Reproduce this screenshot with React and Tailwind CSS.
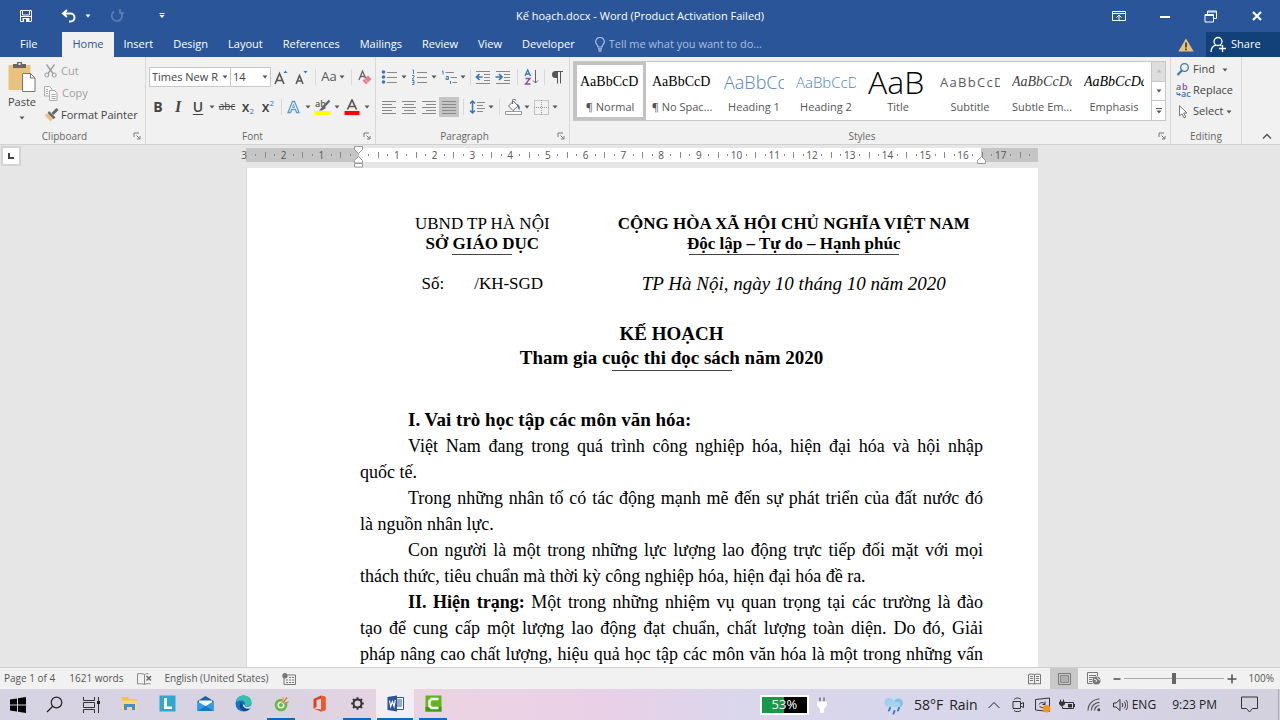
import { useState } from 'react';
import clsx from 'clsx';

const TABS = ['File', 'Home', 'Insert', 'Design', 'Layout', 'References', 'Mailings', 'Review', 'View', 'Developer'];

const STYLES = [
  { name: 'Normal', mark: true, sample: 'AaBbCcD', className: "font-['Liberation_Serif',serif] text-sm text-black" },
  { name: 'No Spac...', mark: true, sample: 'AaBbCcD', className: "font-['Liberation_Serif',serif] text-sm text-black" },
  { name: 'Heading 1', sample: 'AaBbCc', className: 'font-light text-lg text-[#4d84bd]' },
  { name: 'Heading 2', sample: 'AaBbCcD', className: 'font-light text-[15px] text-[#4d84bd]' },
  { name: 'Title', sample: 'AaB', className: 'font-light text-[32px] text-black' },
  { name: 'Subtitle', sample: 'AaBbCcD', className: 'text-[13px] tracking-widest text-[#5a5a5a]' },
  { name: 'Subtle Em...', sample: 'AaBbCcDd', className: "font-['Liberation_Serif',serif] text-sm italic text-[#404040]" },
  { name: 'Emphasis', sample: 'AaBbCcDd', className: "font-['Liberation_Serif',serif] text-sm italic text-black" },
];

function Svg({ w = 16, h = 16, children, className }) {
  return (
    <svg width={w} height={h} viewBox={`0 0 ${w} ${h}`} fill="none" className={clsx('shrink-0', className)} aria-hidden="true">
      {children}
    </svg>
  );
}

function Caret({ className = 'text-[#555]' }) {
  return (
    <Svg w={6} h={4} className={className}>
      <path d="M0.5 0.5h5L3 3.5z" fill="currentColor" />
    </Svg>
  );
}

function Tool({ label, className = 'w-5', active, children }) {
  return (
    <button
      type="button"
      aria-label={label}
      className={clsx('flex h-5 shrink-0 items-center justify-center hover:bg-[#d5d5d5]', active && 'bg-[#c5c5c5]', className)}
    >
      {children}
    </button>
  );
}

function Drop({ label, className = 'w-2' }) {
  return (
    <Tool label={`${label} options`} className={className}>
      <Caret />
    </Tool>
  );
}

function Sep({ className = 'w-2' }) {
  return (
    <span className={clsx('flex h-4 shrink-0 justify-center', className)}>
      <span className="w-px bg-[#d8d8d8]" />
    </span>
  );
}

function Group({ name, launcher, className, children }) {
  return (
    <section aria-label={name} className={clsx('flex flex-col border-r border-[#d8d8d8]', className)}>
      <div className="flex-1">{children}</div>
      <div className="flex h-4 items-center justify-center">
        <span className="flex-1 text-center text-[10px] leading-4 text-[#666]">{name}</span>
        {launcher && (
          <button type="button" aria-label={`${name} settings`} className="flex w-4 justify-center">
            <Svg w={8} h={8}>
              <path d="M1 5V1h5M3.5 3.5l3 3M7 4v3H4" stroke="#777" />
            </Svg>
          </button>
        )}
      </div>
    </section>
  );
}

function TitleBar() {
  return (
    <header className="grid h-8 grid-cols-[1fr_auto_1fr] items-center bg-[#2a5699] text-white">
      <div className="flex items-center pl-[19px]">
        <button type="button" aria-label="Save">
          <Svg w={14} h={14}>
            <path d="M1.500 1.500h11v11h-11z" stroke="#fff" />
            <path d="M3.500 1.500v4.500h7V1.500M1 7.500h12" stroke="#fff" />
            <path d="M3.500 9h7v4h-7z" fill="#fff" />
            <path d="M5 10h2v3H5z" fill="#2a5699" />
          </Svg>
        </button>
        <button type="button" aria-label="Undo" className="ml-7">
          <Svg w={16} h={14}>
            <path d="M6 1L2 4.500L6 8M2.500 4.500H9.500a4 4 0 0 1 0 8H8" stroke="#fff" strokeWidth="2" />
          </Svg>
        </button>
        <button type="button" aria-label="Undo history" className="ml-2">
          <Caret className="text-white" />
        </button>
        <button type="button" aria-label="Redo" className="ml-[18px]">
          <Svg w={16} h={16}>
            <path d="M5 3.500A5.200 5.200 0 1 0 11.500 4M11 1v4h4" stroke="#5c80b8" strokeWidth="1.700" />
          </Svg>
        </button>
        <button type="button" aria-label="Customize Quick Access Toolbar" className="ml-[34px]">
          <Svg w={6} h={6}>
            <path d="M0.500 0.500h5" stroke="#fff" />
            <path d="M0.500 2h5L3 5z" fill="#fff" />
          </Svg>
        </button>
      </div>
      <h1 className="text-[11px]">Kế hoạch.docx - Word (Product Activation Failed)</h1>
      <div className="flex items-center justify-end">
        <button type="button" aria-label="Ribbon Display Options" className="flex w-[46px] justify-center">
          <Svg w={14} h={12}>
            <path d="M0.500 1.500h13v9H0.500zM0.500 3.500h13" stroke="#fff" />
            <path d="M7 10V5M4.500 7.500L7 5l2.500 2.500" stroke="#fff" />
          </Svg>
        </button>
        <button type="button" aria-label="Minimize" className="flex w-[46px] justify-center">
          <Svg w={10} h={6}>
            <path d="M0 4h10" stroke="#fff" strokeWidth="2" />
          </Svg>
        </button>
        <button type="button" aria-label="Restore" className="flex w-[46px] justify-center">
          <Svg w={14} h={13}>
            <path d="M3.500 4V1h9v7.500H10" stroke="#fff" />
            <path d="M3.500 2h9" stroke="#fff" />
            <path d="M1 4.500h8.500v7.500H1z" stroke="#fff" />
            <path d="M1 5.500h8.500" stroke="#fff" />
          </Svg>
        </button>
        <button type="button" aria-label="Close" className="flex w-[46px] justify-center">
          <Svg w={10} h={10}>
            <path d="M1 1l8 8M9 1L1 9" stroke="#fff" strokeWidth="2.200" />
          </Svg>
        </button>
      </div>
    </header>
  );
}

function TabRow({ active, onSelect }) {
  return (
    <nav className="flex h-[25px] items-stretch bg-[#2a5699] text-[11px] text-white">
      <div role="tablist" className="flex">
        {TABS.map((tab) => (
          <button
            key={tab}
            type="button"
            role="tab"
            aria-selected={tab === active}
            onClick={() => onSelect(tab)}
            className={clsx(
              tab === 'File' ? 'pl-5 pr-[25px]' : 'px-2.5',
              tab === active && 'bg-[#f1f1f1] text-[#2a5699]'
            )}
          >
            {tab}
          </button>
        ))}
      </div>
      <label className="flex items-center pl-2.5">
        <Svg w={10} h={15}>
          <path d="M3 10c0-2-2.300-2.700-2.300-5.300a4.300 4.300 0 0 1 8.600 0C9.300 7.300 7 8 7 10z" stroke="#a9bfdf" strokeWidth="1.200" />
          <path d="M3 12h4M3.500 14h3" stroke="#a9bfdf" strokeWidth="1.300" />
        </Svg>
        <input
          type="text"
          aria-label="Tell me what you want to do"
          placeholder="Tell me what you want to do..."
          className="ml-1 w-48 bg-transparent placeholder:text-[#a9bfdf] focus:outline-none"
        />
      </label>
      <div className="ml-auto flex items-stretch">
        <button type="button" aria-label="Activation warning" className="px-3">
          <Svg w={16} h={14}>
            <path d="M8 0.500L15.700 13.500H0.300z" fill="#e8c27c" />
            <path d="M8 4.500v5M8 10.500v1.800" stroke="#333" strokeWidth="1.600" />
          </Svg>
        </button>
        <button type="button" className="flex w-[74px] items-center gap-1 bg-[#124078] pl-1">
          <Svg w={17} h={17}>
            <circle cx="8" cy="5.500" r="4" stroke="#fff" strokeWidth="1.300" />
            <path d="M1 16c0-3.500 2-6 5-6.800M10 9l1.500 1" stroke="#fff" strokeWidth="1.300" />
            <path d="M12.500 9v7M9 12.500h7" stroke="#fff" strokeWidth="1.300" />
          </Svg>
          Share
        </button>
      </div>
    </nav>
  );
}

function ClipboardGroup() {
  return (
    <Group name="Clipboard" launcher className="w-[146px]">
      <div className="flex text-[11px]">
        <button type="button" className="flex w-11 flex-col items-center pt-1 text-[#444]">
          <Svg w={28} h={32}>
            <path d="M0.500 4h22v25h-22z" fill="#e9c37b" />
            <path d="M5 3h4V1h5v2h4v4H5z" fill="#666" />
            <path d="M10.500 2h2v2h-2z" fill="#f1f1f1" />
            <path d="M14.500 12.500h8l4.500 4.500v13.500H14.500z" fill="#fff" stroke="#777" />
            <path d="M22.500 12.500V17H27" stroke="#777" />
          </Svg>
          <span className="mt-px leading-4">Paste</span>
          <span className="flex h-4 items-center"><Caret /></span>
        </button>
        <div className="flex flex-col pt-[3px]">
          <button type="button" className="flex h-[22px] items-center gap-1 text-[#a0a0a0]">
            <Svg w={13} h={14}>
              <path d="M2.500 0.500l6.500 9M10.500 0.500l-6.500 9" stroke="#999" strokeWidth="1.300" />
              <circle cx="2.800" cy="11" r="2" stroke="#999" />
              <circle cx="10.200" cy="11" r="2" stroke="#999" />
            </Svg>
            Cut
          </button>
          <button type="button" className="flex h-[22px] items-center gap-1 text-[#a0a0a0]">
            <Svg w={14} h={15}>
              <path d="M0.500 0.500h5l2.500 2.500v7H0.500z" fill="#f8f8f8" stroke="#aaa" />
              <path d="M5.500 4.500h5l2.500 2.500v7.500H5.500z" fill="#f8f8f8" stroke="#aaa" />
              <path d="M2 3.500h2M2 5.500h2M2 7.500h2M7.500 8.500h4M7.500 10.500h4M7.500 12.500h4" stroke="#aaa" />
            </Svg>
            Copy
          </button>
          <button type="button" className="flex h-[22px] items-center gap-[2px] whitespace-nowrap text-[#444]">
            <Svg w={15} h={14}>
              <path d="M0.500 7l4-2 5 5.500-3 3z" fill="#e9c37b" />
              <path d="M5 3l6.500 6.500-2 1.500L3.800 5z" fill="#666" />
              <path d="M8.500 6l5-5" stroke="#666" strokeWidth="3" />
            </Svg>
            Format Painter
          </button>
        </div>
      </div>
    </Group>
  );
}

function FontGroup() {
  return (
    <Group name="Font" launcher className="w-[230px]">
      <div className="flex items-center pl-[3px] pt-2.5">
        <span className="relative w-[82px]">
          <select aria-label="Font" className="h-5 w-full appearance-none border border-[#c8c8c8] bg-white pl-[2px] pr-2 text-[11px] text-[#444]">
            <option>Times New R</option>
          </select>
          <span className="pointer-events-none absolute right-[3px] top-2"><Caret /></span>
        </span>
        <span className="relative -ml-px w-[41px]">
          <select aria-label="Font size" className="h-5 w-full appearance-none border border-[#c8c8c8] bg-white pl-[2px] pr-2 text-[11px] text-[#444]">
            <option>14</option>
          </select>
          <span className="pointer-events-none absolute right-[3px] top-2"><Caret /></span>
        </span>
        <Tool label="Increase Font Size">
          <Svg w={14} h={15}>
            <path d="M1 14L5.500 3.500L10 14M2.500 10.500h6" stroke="#555" strokeWidth="1.600" />
            <path d="M9.500 3l2-2.500 2 2.500z" fill="#3a76b5" />
          </Svg>
        </Tool>
        <Tool label="Decrease Font Size">
          <Svg w={14} h={15}>
            <path d="M2 14L5.500 5.500L9 14M3 11h5" stroke="#555" strokeWidth="1.500" />
            <path d="M9.500 1h4l-2 2.500z" fill="#3a76b5" />
          </Svg>
        </Tool>
        <Sep />
        <Tool label="Change Case" className="w-7">
          <span className="mr-[2px] text-[13px] text-[#555]">Aa</span>
          <Caret />
        </Tool>
        <Sep />
        <Tool label="Clear Formatting">
          <Svg w={14} h={15}>
            <path d="M1 10L4.500 1L8 9M2.300 6.500h4.500" stroke="#666" strokeWidth="1.300" />
            <path d="M4.500 10.500l5.500-5 3.500 3.500-5.500 5.500z" fill="#e57f8e" />
            <path d="M6.500 9l3.300 3.500" stroke="#f6c6cd" />
          </Svg>
        </Tool>
      </div>
      <div className="flex items-center pl-[2px] pt-2.5 text-[#444]">
        <Tool label="Bold"><b className="text-sm">B</b></Tool>
        <Tool label="Italic"><b className="font-['Liberation_Serif',serif] text-base italic">I</b></Tool>
        <Tool label="Underline"><span className="text-sm font-semibold underline underline-offset-2">U</span></Tool>
        <Drop label="Underline" />
        <Tool label="Strikethrough" className="w-[22px]"><span className="text-[10px] line-through">abc</span></Tool>
        <Tool label="Subscript">
          <span className="text-sm font-semibold">x</span>
          <span className="mt-2 text-[8px] text-[#3a76b5]">2</span>
        </Tool>
        <Tool label="Superscript">
          <span className="text-sm font-semibold">x</span>
          <span className="mb-2 text-[8px] text-[#3a76b5]">2</span>
        </Tool>
        <Sep className="w-[6px]" />
        <Tool label="Text Effects">
          <Svg w={14} h={14}>
            <path d="M1 12.500L5.500 1.500h2l4.500 11H9.500L8.500 9.500h-4l-1 3z" stroke="#5b9bd5" strokeWidth="1.300" fill="#fff" />
            <path d="M5.300 7.500L6.500 4.300l1.200 3.200z" stroke="#5b9bd5" />
          </Svg>
        </Tool>
        <Drop label="Text effect" />
        <Tool label="Text Highlight Color">
          <Svg w={17} h={16}>
            <text x="1" y="8" fontSize="9" fontWeight="600" fill="#555">ab</text>
            <path d="M15.500 1.500L9 8.500" stroke="#666" strokeWidth="2.500" />
            <path d="M9.500 6.500l2.500 2.500-4 2.500H5z" fill="#666" />
            <path d="M0.500 12h16v4h-16z" fill="#ffff00" />
          </Svg>
        </Tool>
        <Drop label="Highlight" className="w-[10px]" />
        <Tool label="Font Color">
          <Svg w={16} h={16}>
            <path d="M3.500 10.500L8 1L12.500 10.500M5 7.500h6" stroke="#555" strokeWidth="1.700" />
            <path d="M0.500 12h15v4h-15z" fill="#f00" />
          </Svg>
        </Tool>
        <Drop label="Font color" className="w-[10px]" />
      </div>
    </Group>
  );
}

const ALIGN_LINES = {
  left: 'M1 1.500h14M1 4.500h10M1 7.500h14M1 10.500h10M1 13.500h14',
  center: 'M1 1.500h14M3 4.500h10M1 7.500h14M3 10.500h10M1 13.500h14',
  right: 'M1 1.500h14M5 4.500h10M1 7.500h14M5 10.500h10M1 13.500h14',
  justify: 'M1 1.500h14M1 4.500h14M1 7.500h14M1 10.500h14M1 13.500h14',
};

function ParagraphGroup() {
  const [align, setAlign] = useState('justify');
  return (
    <Group name="Paragraph" launcher className="w-[194px]">
      <div className="flex items-center pl-[3px] pt-2.5">
        <Tool label="Bullets">
          <Svg w={16} h={14}>
            <circle cx="2.500" cy="2" r="1.800" fill="#3a76b5" />
            <circle cx="2.500" cy="7" r="1.800" fill="#3a76b5" />
            <circle cx="2.500" cy="12" r="1.800" fill="#3a76b5" />
            <path d="M6 2.500h10M6 7.500h10M6 12.500h10" stroke="#888" />
          </Svg>
        </Tool>
        <Drop label="Bullet" className="w-[10px]" />
        <Tool label="Numbering">
          <Svg w={16} h={16}>
            <path d="M1.500 1h1v4M1 6.500h2v1.500l-2 2h2M1 11.500h2v4H1M1.500 13.500H3" stroke="#3a76b5" strokeWidth="0.900" />
            <path d="M6 3.500h10M6 8.500h10M6 13.500h10" stroke="#888" />
          </Svg>
        </Tool>
        <Drop label="Numbering" className="w-[10px]" />
        <Tool label="Multilevel List">
          <Svg w={16} h={16}>
            <path d="M1 2h1v3.500M5 7.500h2.500v3H5V9h2.500M9.500 12v3" stroke="#3a76b5" strokeWidth="0.900" />
            <path d="M4.500 3.500H13M9.500 8.500H16M11.500 13.500H16" stroke="#888" />
          </Svg>
        </Tool>
        <Drop label="Multilevel" />
        <Sep className="w-[6px]" />
        <Tool label="Decrease Indent">
          <Svg w={16} h={14}>
            <path d="M1 1.500h14M9 4.500h6M9 7.500h6M9 10.500h6M1 13.500h14" stroke="#888" />
            <path d="M7.500 7H2M4.500 4L1.500 7l3 3" stroke="#3a76b5" strokeWidth="1.700" />
          </Svg>
        </Tool>
        <Tool label="Increase Indent">
          <Svg w={16} h={14}>
            <path d="M1 1.500h14M9 4.500h6M9 7.500h6M9 10.500h6M1 13.500h14" stroke="#888" />
            <path d="M0.500 7H6M4 4l3 3-3 3" stroke="#3a76b5" strokeWidth="1.700" />
          </Svg>
        </Tool>
        <Sep />
        <Tool label="Sort">
          <Svg w={15} h={16}>
            <path d="M1 7L3.700 1L6.500 7M2 5h3.500" stroke="#3a76b5" strokeWidth="1.300" />
            <path d="M1.500 9.500H6L1.500 15H6.500" stroke="#8a4fa3" strokeWidth="1.400" />
            <path d="M11.500 1v13M9 11.500l2.500 2.500 2.500-2.500" stroke="#666" />
          </Svg>
        </Tool>
        <Sep className="w-[6px]" />
        <Tool label="Show paragraph marks">
          <Svg w={12} h={14}>
            <path d="M6 1H4.500a3.500 3.500 0 0 0 0 7H6z" fill="#555" />
            <path d="M6.500 1v12.500M9.500 1v12.500M4.500 1.500H12" stroke="#555" />
          </Svg>
        </Tool>
      </div>
      <div className="flex items-center pl-[3px] pt-2.5">
        {Object.keys(ALIGN_LINES).map((key) => (
          <button
            key={key}
            type="button"
            aria-label={`Align ${key}`}
            aria-pressed={align === key}
            onClick={() => setAlign(key)}
            className={clsx('flex h-5 w-5 items-center justify-center', align === key && 'bg-[#c5c5c5]')}
          >
            <Svg w={16} h={15}><path d={ALIGN_LINES[key]} stroke="#888" /></Svg>
          </button>
        ))}
        <Sep />
        <Tool label="Line Spacing">
          <Svg w={16} h={16}>
            <path d="M3.500 2v12M1 4.500L3.500 2 6 4.500M1 11.500L3.500 14 6 11.500" stroke="#3a76b5" strokeWidth="1.500" />
            <path d="M8 3.500h8M8 6.500h6M8 9.500h8M8 12.500h6" stroke="#888" />
          </Svg>
        </Tool>
        <Drop label="Spacing" />
        <Sep />
        <Tool label="Shading">
          <Svg w={17} h={16}>
            <path d="M3.500 7L8.500 2l4.500 5-5 4.500z" fill="#fff" stroke="#666" />
            <path d="M7.500 5V1.500a1.500 1.500 0 0 1 3 0" stroke="#666" />
            <path d="M12 5c2 0.500 3.500 3 2.500 6-1-0.500-2-2-1.500-4z" fill="#3a76b5" />
            <path d="M0.500 12.500h16v3h-16z" fill="#fff" stroke="#999" />
          </Svg>
        </Tool>
        <Drop label="Shading" />
        <Tool label="Borders">
          <Svg w={15} h={15}>
            <path d="M0.500 0.500h14v14h-14zM7.500 0v15M0 7.500h15" stroke="#999" strokeDasharray="1 1" />
          </Svg>
        </Tool>
        <Drop label="Border" />
      </div>
    </Group>
  );
}

function StylesGroup() {
  const [current, setCurrent] = useState('Normal');
  return (
    <Group name="Styles" launcher className="min-w-0 flex-1">
      <div className="ml-[3px] mr-1 mt-1 flex h-[60px] border border-[#c6c6c6] bg-white">
        {STYLES.map((s) => (
          <button
            key={s.name}
            type="button"
            aria-pressed={current === s.name}
            onClick={() => setCurrent(s.name)}
            className={clsx(
              'flex w-[72px] shrink-0 flex-col items-center border-[3px]',
              current === s.name ? 'border-[#c2c2c2]' : 'border-transparent'
            )}
          >
            <span className={clsx('h-[34px] w-[60px] overflow-hidden whitespace-nowrap text-left', s.className)}>
              <span className="block leading-[34px]">{s.sample}</span>
            </span>
            <span className="whitespace-nowrap text-[11px] leading-4 text-[#555]">{s.mark && '¶ '}{s.name}</span>
          </button>
        ))}
        <div className="ml-auto flex w-[14px] flex-col divide-y divide-[#c6c6c6] border-l border-[#c6c6c6]">
          <button type="button" aria-label="Previous styles" className="flex flex-1 items-center justify-center bg-[#dedede]">
            <Caret className="rotate-180 text-[#bbb]" />
          </button>
          <button type="button" aria-label="Next styles" className="flex flex-1 items-center justify-center">
            <Caret />
          </button>
          <button type="button" aria-label="More styles" className="flex flex-1 items-center justify-center">
            <Svg w={6} h={6}>
              <path d="M0 0.500h6" stroke="#555" />
              <path d="M0.500 2.500h5L3 5.500z" fill="#555" />
            </Svg>
          </button>
        </div>
      </div>
    </Group>
  );
}

function EditingGroup() {
  return (
    <Group name="Editing" className="w-[71px]">
      <div className="flex flex-col pl-[5px] pt-[2px] text-[11px] text-[#444]">
        <button type="button" className="flex h-[21px] items-center gap-[3px]">
          <Svg w={14} h={13}>
            <circle cx="8.500" cy="4.500" r="3.800" stroke="#3a76b5" strokeWidth="1.300" />
            <path d="M5.800 7.500L1.500 12" stroke="#3a76b5" strokeWidth="2" />
          </Svg>
          Find
          <span className="ml-1"><Caret /></span>
        </button>
        <button type="button" className="flex h-[21px] items-center gap-[2px]">
          <Svg w={15} h={15}>
            <text x="0" y="7" fontSize="9" fontWeight="600" fill="#666">a</text>
            <text x="6" y="7" fontSize="9" fontWeight="600" fill="#8a4fa3">b</text>
            <text x="5" y="14" fontSize="9" fontWeight="600" fill="#3a76b5">ac</text>
            <path d="M1 9v2.500h3M2.800 10l1.500 1.500L2.800 13" stroke="#3a76b5" />
          </Svg>
          Replace
        </button>
        <button type="button" className="flex h-[21px] items-center gap-[3px]">
          <Svg w={14} h={14}>
            <path d="M3.500 0.800v10l2.500-2 2 4 1.700-0.800-2-4H11z" fill="#fff" stroke="#777" />
          </Svg>
          Select
          <Caret />
        </button>
      </div>
    </Group>
  );
}

const ZERO = 113;
const CM = 37.75;

function Ruler() {
  const marks = [];
  for (let q = -11; q < 72; q += 1) {
    const x = ZERO + (q * CM) / 4;
    if (q % 4 === 0) {
      if (q !== 0) marks.push(<text key={q} x={x} y="11" textAnchor="middle" fontSize="10" fill="#555">{Math.abs(q / 4)}</text>);
    } else {
      const half = q % 2 === 0 ? 3 : 1;
      marks.push(<path key={q} d={`M${Math.round(x) + 0.5} ${7 - half}v${half * 2}`} stroke="#888" />);
    }
  }
  return (
    <svg viewBox="0 0 792 20" className="block h-5 w-full overflow-visible" role="img" aria-label="Ruler">
      <rect width="792" height="14" fill="#fff" />
      <rect width="113" height="14" fill="#c5c5c5" />
      <rect x="735" width="57" height="14" fill="#c5c5c5" />
      <text x="-2" y="11" textAnchor="middle" fontSize="10" fill="#555">3</text>
      {marks}
      <path d="M108.500 -1.500h8v3l-4 4-4-4z" fill="#fff" stroke="#999" />
      <path d="M108.500 15v-2.500l4-4 4 4V15z" fill="#fff" stroke="#999" />
      <path d="M108.500 15.500h8v3.500h-8z" fill="#fff" stroke="#999" />
      <path d="M731.500 15.500v-3l4-4 4 4v3z" fill="#fff" stroke="#999" />
    </svg>
  );
}

// Each paragraph is set line by line; every line but a closing one is justified.
const PARAGRAPHS = [
  { lines: ['Việt Nam đang trong quá trình công nghiệp hóa, hiện đại hóa và hội nhập', 'quốc tế.'] },
  { lines: ['Trong những nhân tố có tác động mạnh mẽ đến sự phát triển của đất nước đó', 'là nguồn nhân lực.'] },
  {
    lines: [
      'Con người là một trong những lực lượng lao động trực tiếp đối mặt với mọi',
      'thách thức, tiêu chuẩn mà thời kỳ công nghiệp hóa, hiện đại hóa đề ra.',
    ],
  },
  {
    lead: 'II. Hiện trạng:',
    open: true,
    lines: [
      ' Một trong những nhiệm vụ quan trọng tại các trường là đào',
      'tạo để cung cấp một lượng lao động đạt chuẩn, chất lượng toàn diện. Do đó, Giải',
      'pháp nâng cao chất lượng, hiệu quả học tập các môn văn hóa là một trong những vấn',
    ],
  },
];

function Paragraph({ lead, open, lines }) {
  return (
    <p>
      {lines.map((line, i) => (
        <span
          key={line}
          className={clsx(
            'block whitespace-nowrap',
            i === 0 ? 'indent-12' : 'indent-0',
            (open || i < lines.length - 1) && '[text-align-last:justify]'
          )}
        >
          {i === 0 && lead && <b>{lead}</b>}
          {line}
        </span>
      ))}
    </p>
  );
}

function DocumentPage() {
  return (
    <article className="flex-1 overflow-hidden border-l border-[#dcdcdc] bg-white pl-[113px] pr-[55px] pt-[46px] font-['Liberation_Serif',serif] text-[19px] leading-[26px] text-black">
      <div className="grid grid-cols-[245fr_379fr] text-center text-[17px] leading-5">
        <div>
          <p>UBND TP HÀ NỘI</p>
          <p className="font-bold">SỞ GIÁO DỤC</p>
          <hr className="mx-auto w-[60px] border-[#444]" />
        </div>
        <div>
          <p className="font-bold">CỘNG HÒA XÃ HỘI CHỦ NGHĨA VIỆT NAM</p>
          <p className="font-bold">Độc lập – Tự do – Hạnh phúc</p>
          <hr className="mx-auto w-[210px] border-[#444]" />
        </div>
        <p className="mt-[19px] flex justify-center gap-[30px]"><span>Số:</span><span>/KH-SGD</span></p>
        <p className="mt-[19px] text-[19px] italic">TP Hà Nội, ngày 10 tháng 10 năm 2020</p>
      </div>
      <div className="mt-7 text-center font-bold leading-6">
        <h2>KẾ HOẠCH</h2>
        <h3>Tham gia cuộc thi đọc sách năm 2020</h3>
        <hr className="mx-auto w-[120px] border-[#444]" />
      </div>
      <div className="mt-9 text-[18px]">
        <h4 className="indent-12 text-[19px] font-bold">I. Vai trò học tập các môn văn hóa:</h4>
        {PARAGRAPHS.map((p) => (
          <Paragraph key={p.lines[0]} {...p} />
        ))}
      </div>
    </article>
  );
}

function StatusBar() {
  const [zoom, setZoom] = useState(50);
  return (
    <footer className="flex h-[22px] shrink-0 items-center border-t border-[#cfcfcf] bg-[#f1f1f1] pl-1 text-[10px] text-[#555]">
      <span>Page 1 of 4</span>
      <span className="ml-3.5">1621 words</span>
      <button type="button" aria-label="Proofing errors" className="ml-3.5">
        <Svg w={15} h={12}>
          <path d="M7.500 1.500C6 0.500 3 0.500 0.500 0.800V11c2.500-0.500 5.500-0.300 7 0.500zM7.500 1.500c1-0.700 2.500-1 4-0.900M7.500 11.500c1.500-0.800 3-1 6-0.700" stroke="#888" />
          <path d="M9.500 3l4.500 4.500M14 3L9.500 7.500" stroke="#666" strokeWidth="1.500" />
        </Svg>
      </button>
      <button type="button" className="ml-3">English (United States)</button>
      <button type="button" aria-label="Record macro" className="ml-3.5">
        <Svg w={14} h={12}>
          <path d="M2 4.500v7h11.500V2H6" stroke="#777" />
          <path d="M7 4.500h5M4 7h8M4 9.500h8" stroke="#777" strokeDasharray="2 1" />
          <circle cx="3" cy="2.800" r="2.700" fill="#777" />
        </Svg>
      </button>
      <div className="ml-auto flex h-full items-center">
        <button type="button" aria-label="Read Mode" className="flex h-full w-8 items-center justify-center">
          <Svg w={13} h={12}>
            <path d="M0.500 1.500c2-0.500 4-0.500 6 0 2-0.500 4-0.500 6 0V11c-2-0.500-4-0.500-6 0-2-0.500-4-0.500-6 0zM6.500 1.500V11" stroke="#777" />
            <path d="M2 3.500h3M2 5.500h3M2 7.500h3M8 3.500h3M8 5.500h3M8 7.500h3" stroke="#777" />
          </Svg>
        </button>
        <button type="button" aria-label="Print Layout" aria-pressed="true" className="flex h-full w-7 items-center justify-center bg-[#c8c8c8]">
          <Svg w={13} h={12}>
            <path d="M0.500 0.500h12v11h-12z" stroke="#777" />
            <path d="M2.500 2.500h8v7h-8z" fill="#b0b0b0" stroke="#888" />
          </Svg>
        </button>
        <button type="button" aria-label="Web Layout" className="mr-[3px] flex h-full w-8 items-center justify-center">
          <Svg w={14} h={13}>
            <path d="M10.500 4V0.500h-10v11h5" stroke="#777" />
            <path d="M2 3.500h7M2 5.500h5M2 7.500h3M2 9.500h3" stroke="#777" />
            <circle cx="9.500" cy="8.500" r="4" fill="#777" />
            <path d="M7 7l2.500 1-0.500 2M10.500 5.500l1 2 1.500 0.500" stroke="#f1f1f1" />
          </Svg>
        </button>
        <button type="button" aria-label="Zoom out">
          <Svg w={8} h={10}><path d="M0.500 5h7" stroke="#555" strokeWidth="1.600" /></Svg>
        </button>
        <input
          type="range"
          aria-label="Zoom"
          value={zoom}
          onChange={(e) => setZoom(Number(e.target.value))}
          className="mx-[3px] h-3 w-[100px] appearance-none bg-transparent [&::-webkit-slider-runnable-track]:h-px [&::-webkit-slider-runnable-track]:bg-[#aaa] [&::-webkit-slider-thumb]:-mt-[5px] [&::-webkit-slider-thumb]:h-[11px] [&::-webkit-slider-thumb]:w-1 [&::-webkit-slider-thumb]:appearance-none [&::-webkit-slider-thumb]:bg-[#666]"
        />
        <button type="button" aria-label="Zoom in">
          <Svg w={10} h={10}><path d="M0.500 5h9M5 0.500v9" stroke="#555" strokeWidth="1.600" /></Svg>
        </button>
        <span className="w-[43px] pr-[6px] text-right">100%</span>
      </div>
    </footer>
  );
}

const APPS = [
  {
    name: 'File Explorer',
    icon: (
      <>
        <path d="M1 2h6l1.500 2H16v11H1z" fill="#f6c344" />
        <path d="M1 5.500h15V15H1z" fill="#fbd976" />
        <path d="M3 9h11v6h-3v-3H6v3H3z" fill="#3f8fd6" />
      </>
    ),
  },
  {
    name: 'LockHunter',
    icon: (
      <>
        <path d="M0.500 0.500h16v16h-16z" fill="#31a7cf" />
        <path d="M5 3h3v8.500h5v2.500H5z" fill="#fff" />
      </>
    ),
  },
  {
    name: 'Mail',
    icon: (
      <>
        <path d="M0.500 6L8.500 1l8 5v10h-16z" fill="#1b62a8" />
        <path d="M2 5.500h13V11l-6.500 3L2 11z" fill="#f5f9fd" />
        <path d="M0.500 6.500l8 4.500 8-4.500V16h-16z" fill="#2f9de4" />
        <path d="M0.500 16l8-5 8 5z" fill="#1478c8" />
      </>
    ),
  },
  {
    name: 'Edge',
    icon: (
      <>
        <circle cx="8.500" cy="8.500" r="8" fill="#1b6fc2" />
        <path d="M0.700 7.500C1.500 3 4.800 0.500 8.700 0.500c4.500 0 7.800 3 7.800 6.700 0 2.500-1.800 4.300-4.300 4.300-1.700 0-2.700-0.700-2.400-1.500C10.500 8 9.500 5.500 6.500 5.500c-2.500 0-4.500 0.500-5.800 2z" fill="#35c1b0" />
        <path d="M6 7c-2 2.500-1.500 7.500 3.500 9.200 2.800 0 5-1.500 6-3.200-4 1.500-8.500 0-8.500-4z" fill="#114a8b" />
        <path d="M9.800 10c-0.500 1 0.500 2 2.500 2 1.500 0 3-0.600 4-2l-0.800 3c-3 1.300-7.500 0.300-7.500-3.500z" fill="#dcebf5" />
      </>
    ),
  },
  {
    name: 'Coc Coc',
    open: true,
    icon: (
      <>
        <circle cx="8" cy="10" r="6.300" fill="#66b84a" />
        <circle cx="8" cy="10" r="3.600" fill="#e8f3e2" />
        <circle cx="8" cy="10" r="2" fill="#66b84a" />
        <path d="M8.500 9.500L11 1l4.500 5z" fill="#e6dfe8" />
        <path d="M9 8L10.500 2" stroke="#e7a63a" strokeWidth="1.400" />
        <path d="M10 8l4-5.500" stroke="#e0674b" strokeWidth="1.400" />
        <path d="M11 9l4.500-2.500" stroke="#66b84a" strokeWidth="1.400" />
      </>
    ),
  },
  {
    name: 'Office',
    icon: (
      <>
        <path d="M2.500 4L10 0.500l4.500 1.500v13L10 16.500 2.500 13.500 10 14.500V3.500L5.500 5v7l-3 1.500z" fill="#d8431f" />
        <path d="M10 0.500L14.500 2v13L10 16.500z" fill="#ea5a28" />
      </>
    ),
  },
  {
    name: 'Settings',
    open: true,
    icon: (
      <>
        <circle cx="8.500" cy="8.500" r="4" stroke="#333" strokeWidth="2" />
        <path d="M8.500 2.200v2M8.500 12.800v2M2.200 8.500h2M12.800 8.500h2M4 4l1.500 1.500M11.500 11.500L13 13M4 13l1.500-1.500M11.500 5.500L13 4" stroke="#333" strokeWidth="2" />
      </>
    ),
  },
  {
    name: 'Word',
    open: true,
    active: true,
    icon: (
      <>
        <path d="M8.500 2.500h8v12h-8z" fill="#fff" stroke="#2a5699" />
        <path d="M10 5h5M10 7h5M10 9h5M10 11h5" stroke="#2a5699" />
        <path d="M0.500 2L10 0.500v16L0.500 15z" fill="#2a5699" />
        <path d="M2.500 5.500l1.200 6 1.700-5 1.700 5 1.200-6.500" stroke="#fff" strokeWidth="1.200" />
      </>
    ),
  },
  {
    name: 'Camtasia',
    open: true,
    icon: (
      <>
        <path d="M0.500 0.500h16v16h-16z" fill="#5fb61c" />
        <path d="M0.500 12h16v4.500h-16z" fill="#3f9a12" />
        <path d="M13.500 4H6.500L4.500 6v5l2 2h7" stroke="#fff" strokeWidth="2.500" />
      </>
    ),
  },
];

function Taskbar() {
  return (
    <div className="flex h-[31px] shrink-0 items-center bg-[linear-gradient(90deg,#d5d2e2_0%,#d9d3e1_22%,#ecd3e2_34%,#e9d0e7_47%,#dad7ec_58%,#d8d6ea_75%,#d3d1de_100%)] text-xs text-[#222]">
      <button type="button" aria-label="Start" className="flex w-9 justify-center">
        <Svg w={16} h={16}>
          <path d="M0 2.500l7-1v6H0zM8 1.300L16 0v7.500H8zM0 8.500h7v6l-7-1zM8 8.500h8V16l-8-1.300z" fill="#000" />
        </Svg>
      </button>
      <button type="button" aria-label="Search" className="flex w-9 justify-center">
        <Svg w={17} h={17}>
          <circle cx="10.500" cy="6.500" r="5.300" stroke="#222" strokeWidth="1.200" />
          <path d="M6.500 10.500L1 16" stroke="#222" strokeWidth="1.200" />
        </Svg>
      </button>
      <button type="button" aria-label="Task View" className="flex w-[38px] justify-center">
        <Svg w={17} h={16}>
          <path d="M0.500 0v3.500h11V0M0.500 16v-3.500h11V16M0.500 5.500h11v5H0.500zM15.500 0v16" stroke="#333" />
          <path d="M14 4h3v3h-3z" fill="#222" />
        </Svg>
      </button>
      {APPS.map((app) => (
        <button
          key={app.name}
          type="button"
          aria-label={app.name}
          className={clsx('flex h-full w-[38px] flex-col items-center', app.active && 'bg-[#f3edf4]')}
        >
          <span className="flex flex-1 items-center">
            <Svg w={17} h={17}>{app.icon}</Svg>
          </span>
          <span className={clsx('h-[2px]', app.open && 'bg-[#0e6cbd]', app.active ? 'w-9' : 'w-7')} />
        </button>
      ))}

      <div className="ml-auto flex h-full items-center">
        <div className="flex h-5 w-[49px] items-center justify-center border-2 border-white bg-[linear-gradient(90deg,#17994b_50%,#000_50%)] text-[13px] text-white">53%</div>
        <Svg w={14} h={16} className="ml-1.5">
          <path d="M5 0.500v4M9 0.500v4" stroke="#444" />
          <path d="M2 4.500h10v4L9 12v4H5v-4L2 8.500z" fill="#fff" />
        </Svg>
        <button type="button" className="ml-[54px] flex items-center gap-1.5 text-sm">
          <Svg w={21} h={20} className="mr-1">
            <circle cx="12" cy="5.500" r="5" fill="#bfe0f5" />
            <circle cx="6" cy="7.500" r="4.500" fill="#9fcdee" />
            <circle cx="15.500" cy="8" r="4.500" fill="#86bfe8" />
            <path d="M4 7h13v5H4z" fill="#a4d2f1" />
            <path d="M7 13l-1 2.500M11.500 16l-1 2.500M16 13l-1 2.500" stroke="#2d7dd2" strokeWidth="2" strokeLinecap="round" />
          </Svg>
          <span>58°F</span>
          <span>Rain</span>
        </button>
        <button type="button" aria-label="Show hidden icons" className="ml-2.5">
          <Svg w={12} h={8}><path d="M0.500 7L6 1.500 11.500 7" stroke="#222" /></Svg>
        </button>
        <Svg w={13} h={15} className="ml-3">
          <path d="M1 4.500h7.500v7H1zM8.500 7l3-1.500v5l-3-1.500M2 2.500C4 0.500 7 0.500 9 2.500M2 13.500c2 1.500 5 1.500 7 0" stroke="#333" />
        </Svg>
        <Svg w={16} h={16} className="ml-2.5">
          <path d="M0.500 2.500L14.500 1v13.500L0.500 13z" stroke="#333" />
          <path d="M4 7.500c1-2.500 5-2.500 6 0M10 4.500v3H7.500M10 9c-1 2-4.500 2-5.500 0" stroke="#333" />
          <circle cx="11.500" cy="11.800" r="3.800" fill="#f7941d" />
        </Svg>
        <Svg w={16} h={12} className="ml-2">
          <path d="M5 3.500h9.500v6H3.500V8M15.500 5v3" stroke="#333" />
          <path d="M9 5h4v3.500H9z" fill="#333" />
          <path d="M0.500 3h5v2L3 7.500 0.500 5zM1.500 0.500V3M4.500 0.500V3" stroke="#333" fill="#333" />
        </Svg>
        <Svg w={14} h={14} className="ml-3">
          <path d="M1 12.500A11.500 11.500 0 0 1 12.500 1M4.300 12.500A8.200 8.200 0 0 1 12.500 4.300M7.500 12.500a5 5 0 0 1 5-5" stroke="#555" strokeWidth="1.200" />
          <circle cx="11.800" cy="11.800" r="1.500" fill="#444" />
        </Svg>
        <Svg w={15} h={14} className="ml-3">
          <path d="M0.500 5h2.500L7 1.500v11L3 9H0.500z" stroke="#333" />
          <path d="M9 5c1 1.200 1 2.800 0 4M11 3.500c2 2 2 5 0 7M13 2c2.500 3 2.500 7 0 10" stroke="#333" />
        </Svg>
        <button type="button" className="ml-1">ENG</button>
        <time className="ml-4">9:23 PM</time>
        <button type="button" aria-label="Notifications" className="ml-6">
          <Svg w={17} h={17}>
            <path d="M0.500 1h16v11.500h-5L8.500 16l-3-3.500h-5z" stroke="#333" />
          </Svg>
        </button>
        <span className="ml-5 mr-px h-full w-px bg-[#a9a7b4]" />
      </div>
    </div>
  );
}

export default function App() {
  const [tab, setTab] = useState('Home');

  return (
    <div className="flex h-screen flex-col overflow-hidden bg-[#e6e6e6] font-['Open_Sans',sans-serif] text-xs">
      <TitleBar />
      <TabRow active={tab} onSelect={setTab} />

      {/* Ribbon */}
      <div className="flex h-[88px] shrink-0 border-b border-[#d2d2d2] bg-[#f1f1f1]">
        <ClipboardGroup />
        <FontGroup />
        <ParagraphGroup />
        <StylesGroup />
        <EditingGroup />
        <div className="flex w-[38px] items-end justify-end pb-1 pr-2">
          <button type="button" aria-label="Collapse the Ribbon">
            <Svg w={10} h={8}><path d="M1 6.500l4-4 4 4" stroke="#555" strokeWidth="1.500" /></Svg>
          </button>
        </div>
      </div>

      {/* Workspace */}
      <main className="flex min-h-0 flex-1">
        <div className="w-6 shrink-0 pl-px pt-px">
          <button type="button" aria-label="Tab selector" className="flex h-5 w-5 items-center justify-center border-2 border-[#d4d4d4] bg-white">
            <Svg w={6} h={6}><path d="M1 0v5h5" stroke="#444" strokeWidth="2" /></Svg>
          </button>
        </div>
        <div className="flex min-w-0 flex-1 flex-col items-center pr-5 pt-[3px]">
          <div className="flex min-h-0 w-full max-w-[792px] flex-1 flex-col">
            <Ruler />
            <DocumentPage />
          </div>
        </div>
      </main>

      <StatusBar />
      <Taskbar />
    </div>
  );
}
